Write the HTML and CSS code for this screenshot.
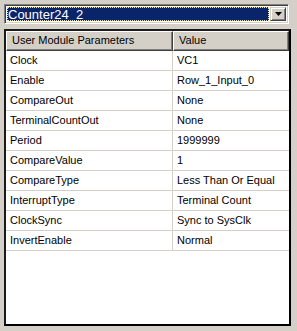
FILE: index.html
```html
<!DOCTYPE html>
<html lang="en">
<head>
    <meta charset="UTF-8">
    <title>User Module Parameters</title>
    <link rel="stylesheet" href="styles.css">
</head>
<body>
    <div class="combo">
        <div class="comboField">
            <span class="comboText">Counter24_2</span>
        </div>
        <div class="comboButton">
            <svg width="7" height="4" viewBox="0 0 7 4"><path d="M0 0h7L3.5 4z" fill="#000"/></svg>
        </div>
    </div>

    <div class="grid">
        <div class="head">
            <div class="hcell first">User Module Parameters</div>
            <div class="hcell">Value</div>
        </div>
        <div class="row"><div class="cell first">Clock</div><div class="cell">VC1</div></div>
        <div class="row"><div class="cell first">Enable</div><div class="cell">Row_1_Input_0</div></div>
        <div class="row"><div class="cell first">CompareOut</div><div class="cell">None</div></div>
        <div class="row"><div class="cell first">TerminalCountOut</div><div class="cell">None</div></div>
        <div class="row"><div class="cell first">Period</div><div class="cell">1999999</div></div>
        <div class="row"><div class="cell first">CompareValue</div><div class="cell">1</div></div>
        <div class="row"><div class="cell first">CompareType</div><div class="cell">Less Than Or Equal</div></div>
        <div class="row"><div class="cell first">InterruptType</div><div class="cell">Terminal Count</div></div>
        <div class="row"><div class="cell first">ClockSync</div><div class="cell">Sync to SysClk</div></div>
        <div class="row"><div class="cell first">InvertEnable</div><div class="cell">Normal</div></div>
    </div>
</body>
</html>
```

FILE: styles.css
```css
* {
    box-sizing: border-box;
}

body {
    margin: 0;
    width: 297px;
    height: 331px;
    background-color: #d4d0c8;
    font-family: "Liberation Sans", Arial, sans-serif;
    font-size: 11px;
    color: #000;
    overflow: hidden;
}

/* combo box at the top */
.combo {
    display: flex;
    margin: 4px 0 0 4px;
    width: 285px;
    height: 20px;
    padding: 1px;
    background-color: #fff;
    border-top: 1px solid #808080;
    border-left: 1px solid #808080;
    border-right: 1px solid #fff;
    border-bottom: 1px solid #fff;
    box-shadow: inset 1px 1px 0 #404040, inset -1px -1px 0 #d4d0c8;
}

.comboField {
    flex: 1;
    margin: 1px;
    background-color: #0a246a;
    border: 1px dotted #f0e8a0;
    color: #fff;
    display: flex;
    align-items: center;
    padding-left: 0;
}

.comboText {
    font-size: 13px;
    line-height: 13px;
}

.comboButton {
    width: 16px;
    margin: 1px 1px 1px 0;
    background-color: #d4d0c8;
    border-top: 1px solid #d4d0c8;
    border-left: 1px solid #d4d0c8;
    border-right: 1px solid #404040;
    border-bottom: 1px solid #404040;
    box-shadow: inset 1px 1px 0 #fff, inset -1px -1px 0 #808080;
    display: flex;
    align-items: center;
    justify-content: center;
}

/* parameter grid */
.grid {
    margin: 5px 0 0 4px;
    width: 287px;
    height: 297px;
    background-color: #fff;
    border: 2px solid #000;
    border-top-color: #1a1a1a;
    border-left-color: #1a1a1a;
}

.head {
    display: flex;
    height: 20px;
}

.hcell {
    flex: 1;
    background-color: #d4d0c8;
    border-top: 1px solid #fff;
    border-left: 1px solid #fff;
    border-right: 1px solid #404040;
    border-bottom: 1px solid #404040;
    box-shadow: inset -1px -1px 0 #808080;
    padding-left: 5px;
    line-height: 17px;
}

.hcell.first {
    flex: 0 0 167px;
}

.row {
    display: flex;
    height: 20px;
    border-bottom: 1px solid #d4d0c8;
}

.cell {
    flex: 1;
    padding-left: 4px;
    line-height: 19px;
}

.cell.first {
    flex: 0 0 167px;
    border-right: 1px solid #d4d0c8;
}
```
